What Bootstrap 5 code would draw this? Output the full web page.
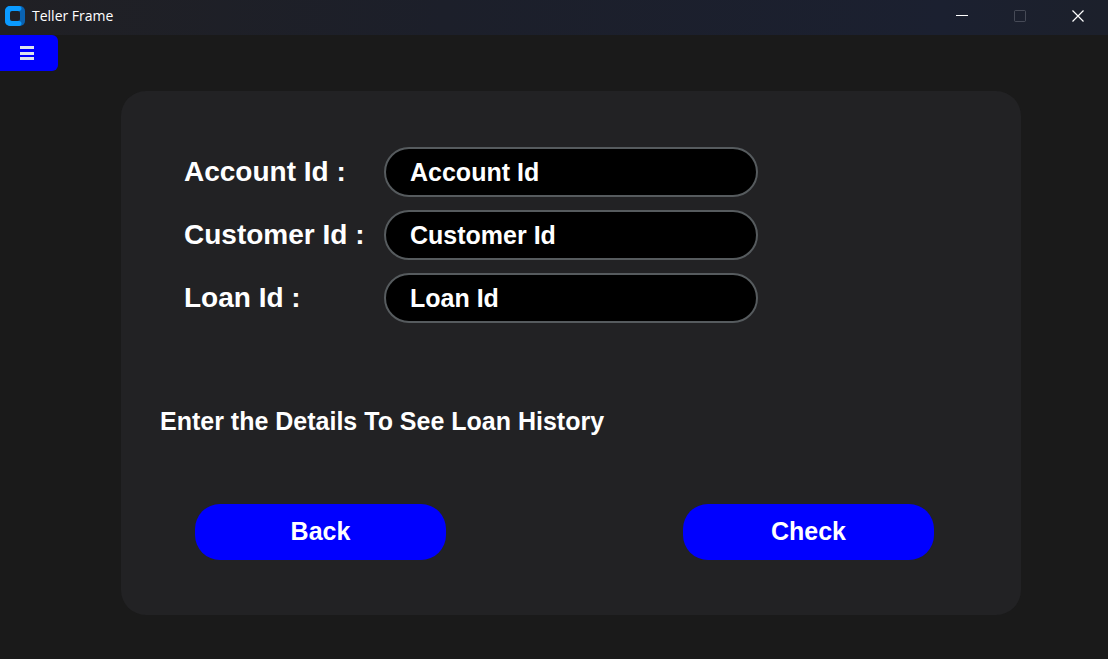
<!DOCTYPE html>
<html lang="en">
<head>
<meta charset="utf-8">
<meta name="viewport" content="width=device-width, initial-scale=1">
<title>Teller Frame</title>
<link href="https://cdn.jsdelivr.net/npm/bootstrap@5.3.0/dist/css/bootstrap.min.css" rel="stylesheet">
<style>
  body { background: #1a1a1a; color: #fff; font-family: "Liberation Sans", Arial, sans-serif; }
  .title-bar { height: 35px; padding: 0 1px 3px 5px; background: linear-gradient(90deg, #202024, #1c1f2a 40%, #1b2030 85%, #1c202b); }
  .title-text { font-size: 14px; line-height: 20px; margin-left: 7px; font-family: "Open Sans", "Noto Sans", sans-serif; }
  .win-btn { width: 58px; height: 32px; color: #fff; }
  .win-btn:disabled { color: #8a8d98; }
  .menu-btn { width: 58px; height: 36px; background: #00f; border-radius: 0 6px 6px 0; padding: 0 4px 0 0; }
  .page-area { padding: 20px 87px 44px 121px; }
  .panel { background: #222224; border-radius: 25px; padding: 56px 87px 55px 63px; }
  .field-grid { display: grid; grid-template-columns: 200px minmax(0, 374px); row-gap: 13px; }
  .field-label { font-size: 28px; line-height: 50px; font-weight: 700; }
  .field-input { height: 50px; padding: 0 24px; border: 2px solid #565b5e; border-radius: 25px; background: #000; color: #fff; font-size: 25px; font-weight: 700; }
  .field-input:focus { background: #000; color: #fff; }
  .field-input::placeholder { color: #fff; opacity: 1; }
  .message { font-size: 25px; line-height: 32px; font-weight: 700; margin: 82px 0 67px -24px; }
  .actions { padding-left: 11px; }
  .action-btn, .action-btn:hover { width: 251px; height: 56px; border-radius: 25px; background: #00f; color: #fff; font-size: 25px; font-weight: 700; }
</style>
</head>
<body>
<header class="title-bar d-flex align-items-center justify-content-between">
  <div class="d-flex align-items-center">
    <svg width="20" height="20" viewBox="0 0 20 20" aria-hidden="true">
      <rect width="20" height="20" rx="5" fill="#0a62b0"/>
      <path d="M5 0h9c1.500 0 2.500 1 2.500 2.500S15.500 5 14 5v10c1.500 0 2.500 1 2.500 2.500S15.500 20 14 20H5a5 5 0 0 1-5-5V5a5 5 0 0 1 5-5z" fill="#0b9bff"/>
      <rect x="5" y="5" width="10" height="10" rx="2" fill="#202127"/>
    </svg>
    <span class="title-text">Teller Frame</span>
  </div>
  <div class="d-flex">
    <button type="button" class="win-btn btn border-0 p-0 d-flex align-items-center justify-content-center" aria-label="Minimize"><svg width="12" height="12"><path d="M0 5.500h12" stroke="currentColor"/></svg></button>
    <button type="button" class="win-btn btn border-0 p-0 d-flex align-items-center justify-content-center" aria-label="Maximize" disabled><svg width="12" height="12"><rect x=".5" y=".5" width="11" height="11" rx="1" fill="none" stroke="currentColor" stroke-opacity=".6"/></svg></button>
    <button type="button" class="win-btn btn border-0 p-0 d-flex align-items-center justify-content-center" aria-label="Close"><svg width="12" height="12"><path d="M.5.5l11 11M11.500.5l-11 11" stroke="currentColor" stroke-width="1.200"/></svg></button>
  </div>
</header>
<button type="button" class="menu-btn border-0 d-flex align-items-center justify-content-center" aria-label="Menu">
  <svg width="14" height="14" fill="#dce4ee"><path d="M0 0h14v3H0zM0 6h14v3H0zM0 11h14v3H0z"/></svg>
</button>
<main class="page-area">
  <form class="panel">
    <div class="field-grid">
      <label class="field-label" for="account">Account Id :</label>
      <input class="form-control field-input" id="account" type="text" placeholder="Account Id">
      <label class="field-label" for="customer">Customer Id :</label>
      <input class="form-control field-input" id="customer" type="text" placeholder="Customer Id">
      <label class="field-label" for="loan">Loan Id :</label>
      <input class="form-control field-input" id="loan" type="text" placeholder="Loan Id">
    </div>
    <p class="message">Enter the Details To See Loan History</p>
    <div class="actions d-flex flex-wrap justify-content-between gap-3">
      <button type="button" class="action-btn btn border-0 p-0">Back</button>
      <button type="button" class="action-btn btn border-0 p-0">Check</button>
    </div>
  </form>
</main>
<script src="https://cdn.jsdelivr.net/npm/bootstrap@5.3.0/dist/js/bootstrap.bundle.min.js"></script>
</body>
</html>
